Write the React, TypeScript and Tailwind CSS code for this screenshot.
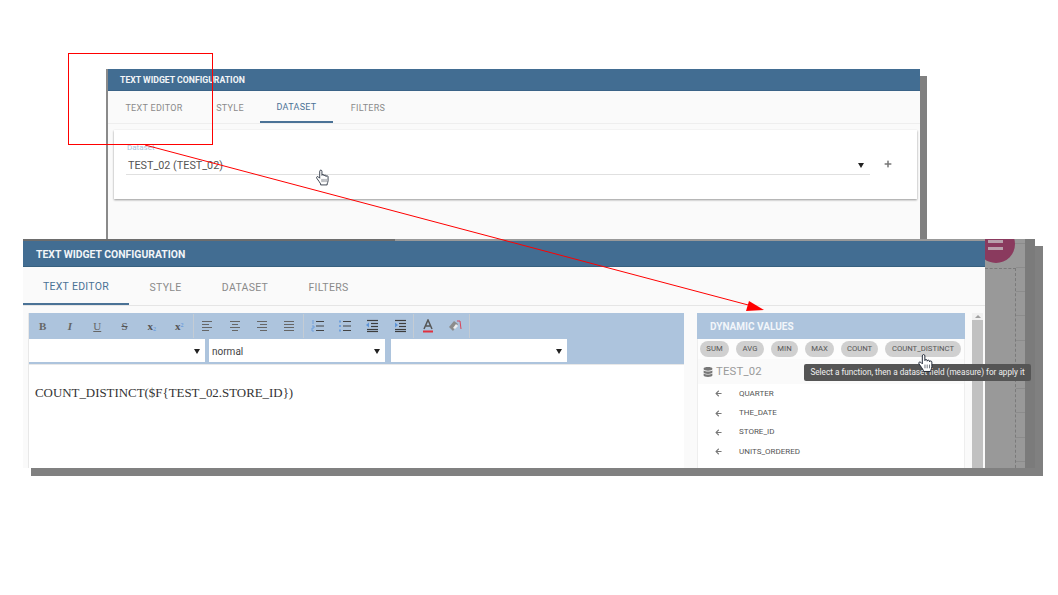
import { FaArrowLeft, FaDatabase, FaPlus } from "react-icons/fa";

const HandCursor = ({ className }: { className: string }) => (
  <svg viewBox="0 0 14 17" className={className}>
    <path
      d="M4 1.800c0-1.700 2.400-1.700 2.400 0V6.200c0-1.300 2.200-1.300 2.200 0v.6c0-1.300 2.200-1.300 2.200 0v.7c0-1.200 2.200-1.200 2.200.1v4.400c0 1.600-.8 2.400-1 3.400v1.100H5v-1.100C4 13.600 2.600 11.800.9 9.400c-.9-1.300.6-2.600 1.700-1.500L4 9.300z"
      fill="#fff"
      stroke="#1b2433"
      strokeWidth="0.9"
      strokeLinejoin="round"
    />
    <path d="M6.500 10v3.500M8.600 10v3.500M10.800 10v3.500" stroke="#1b2433" strokeWidth=".6" />
  </svg>
);

const Caret = () => (
  <span className="w-0 h-0 border-x-[3px] border-x-transparent border-t-[5px] border-t-[#222]" />
);

// toolbar glyphs, all drawn on a 14x14 box
const Lines = ({ kind }: { kind: string }) => {
  const rows = [2, 5, 8, 11];
  const x = (i: number): [number, number] => {
    if (kind === "left") return [2, i % 2 ? 9 : 12];
    if (kind === "center") return i % 2 ? [4, 10] : [2, 12];
    if (kind === "right") return [i % 2 ? 5 : 2, 12];
    return [2, 12];
  };
  return (
    <svg viewBox="0 0 14 14" className="w-[14px] h-[14px]">
      {rows.map((y, i) => (
        <line key={y} x1={x(i)[0]} x2={x(i)[1]} y1={y + 0.5} y2={y + 0.5} stroke="#666" strokeWidth="1" />
      ))}
    </svg>
  );
};

const ListIcon = ({ bullet }: { bullet: boolean }) => (
  <svg viewBox="0 0 14 14" className="w-[14px] h-[14px]">
    {[2.5, 7, 11.5].map((y) => (
      <line key={y} x1="5" x2="13" y1={y} y2={y} stroke="#444" strokeWidth="1" />
    ))}
    {bullet ? (
      [1.5, 6, 10.5].map((y) => <rect key={y} x="1" y={y} width="2" height="2" fill="#6f9fdc" />)
    ) : (
      <path d="M2 1v4M1 7h2v2H1v3h2" stroke="#6f9fdc" strokeWidth="1" fill="none" />
    )}
  </svg>
);

const IndentIcon = ({ out }: { out: boolean }) => (
  <svg viewBox="0 0 14 14" className="w-[14px] h-[14px]">
    {[1.5, 4.5, 7.5, 10.5, 12.5].map((y) => (
      <line key={y} x1={y > 3 && y < 9 ? 6 : 2} x2="13" y1={y} y2={y} stroke="#3d3d3d" strokeWidth="1.2" />
    ))}
    <path d={out ? "M1 6l3-2.500v5z" : "M5 6L2 3.500v5z"} fill="#5d93d6" />
  </svg>
);

const toolbar = [
  [
    <span className="font-['Liberation_Serif',serif] font-bold text-[11px] text-[#666]">B</span>,
    <span className="font-['Liberation_Serif',serif] italic font-bold text-[11px] text-[#666]">I</span>,
    <span className="font-['Liberation_Serif',serif] underline text-[11px] text-[#666]">U</span>,
    <span className="font-['Liberation_Serif',serif] line-through text-[11px] text-[#555]">S</span>,
    <span className="font-['Liberation_Serif',serif] font-bold text-[11px] text-[#555]">
      x<sub className="text-[6px] text-[#6f9fdc]">2</sub>
    </span>,
    <span className="font-['Liberation_Serif',serif] font-bold text-[11px] text-[#555]">
      x<sup className="text-[6px] text-[#6f9fdc]">2</sup>
    </span>,
  ],
  [<Lines kind="left" />, <Lines kind="center" />, <Lines kind="right" />, <Lines kind="justify" />],
  [<ListIcon bullet={false} />, <ListIcon bullet />, <IndentIcon out />, <IndentIcon out={false} />],
  [
    <svg viewBox="0 0 14 14" className="w-[14px] h-[14px]">
      <path d="M3 10L7 1l4 9M5 7h4" stroke="#555" strokeWidth="1.500" fill="none" />
      <rect x="2" y="11.500" width="10" height="2" fill="#e0313f" />
    </svg>,
    <svg viewBox="0 0 14 14" className="w-[14px] h-[14px]">
      <path d="M1 8l5-6 4 3-5 7z" fill="#8c8c8c" />
      <path d="M5 9l3-4 2 2-3 3z" fill="#eee" />
      <path d="M9 2h3l1 8" stroke="#d9455a" strokeWidth="1" fill="none" />
    </svg>,
  ],
];

const functions = [
  { name: "SUM", width: "w-[29px]" },
  { name: "AVG", width: "w-[28px]" },
  { name: "MIN", width: "w-[27px]" },
  { name: "MAX", width: "w-[29px]" },
  { name: "COUNT", width: "w-[37px]" },
  { name: "COUNT_DISTINCT", width: "w-[76px]" },
];

const fields = ["QUARTER", "THE_DATE", "STORE_ID", "UNITS_ORDERED"];

const Select = ({ value, width }: { value?: string; width: string }) => (
  <div className={`${width} h-[23px] bg-white flex items-center justify-between pl-[3px] pr-[5px] pt-px text-[10px] text-[#444]`}>
    <span>{value}</span>
    <Caret />
  </div>
);

const TopWindow = () => (
  <div className="absolute left-[106px] top-[69px] w-[814px] h-[180px] bg-[#fafafa] border-l-2 border-l-[#8a8a8a] shadow-[7px_7px_0_#808080] flex flex-col">
    <div className="h-[22px] shrink-0 bg-[#426d92] border-b border-b-[#3a6387] flex items-center pl-[12px] pt-[2px] text-[8.700px] font-bold text-[#f2f5f8]">
      TEXT WIDGET CONFIGURATION
    </div>
    <div className="h-[33px] shrink-0 flex border-b border-b-[#eeeeee] pt-[3px] text-[9px] tracking-[0.3px] text-[#8a8a8a]">
      <div className="w-[92px] flex items-center justify-center">TEXT EDITOR</div>
      <div className="w-[60px] flex items-center justify-center">STYLE</div>
      <div className="w-[73px] flex items-center justify-center text-[#4a7296] border-b-2 border-b-[#4a7296]">DATASET</div>
      <div className="w-[70px] flex items-center justify-center">FILTERS</div>
    </div>
    <div className="ml-[6px] mr-[3px] mt-[6px] h-[69px] bg-white shadow-[0_1px_2px_rgba(0,0,0,0.4)] px-[12px] pt-[14px] flex items-start">
      <div className="w-[744px] h-[31px] border-b border-b-[#e0e0e0]">
        <div className="pl-px text-[8px] leading-[8px] text-[#a9c4dc]">Dataset</div>
        <div className="flex items-center justify-between pl-[2px] pr-[6px] mt-[7px] text-[10.800px] leading-[13px] text-[#555]">
          <span>TEST_02 (TEST_02)</span>
          <span className="w-0 h-0 border-x-[3.500px] border-x-transparent border-t-[5px] border-t-[#222]" />
        </div>
      </div>
      <FaPlus className="ml-[14px] mt-[16px] w-[8px] h-[8px] text-[#777]" />
    </div>
  </div>
);

const EditorPane = () => (
  <div className="w-[656px] bg-white border-l border-l-[#e8e8e8] flex flex-col">
    <div className="h-[51px] bg-[#adc4dd] flex flex-col">
      <div className="h-[26px] flex">
        {toolbar.map((group, i) => (
          <div key={i} className="flex border-r border-r-[#c4ccd4] my-px">
            {group.map((icon, j) => (
              <div key={j} className="w-[27.300px] flex items-center justify-center">
                {icon}
              </div>
            ))}
          </div>
        ))}
      </div>
      <div className="flex gap-[4px]">
        <Select width="w-[176px]" />
        <Select width="w-[176px]" value="normal" />
        <div className="ml-[2px]">
          <Select width="w-[176px]" />
        </div>
      </div>
    </div>
    <div className="border-t border-t-[#e8e8e8] px-[6px] pt-[20px] font-['Liberation_Serif',serif] text-[12.900px] leading-[16px] text-[#333]">
      {"COUNT_DISTINCT($F{TEST_02.STORE_ID})"}
    </div>
  </div>
);

const DynamicValues = () => (
  <div className="w-[268px] bg-white border-x border-x-[#eeeeee] flex flex-col">
    <div className="h-[26px] shrink-0 -mx-px bg-[#adc4dd] flex items-center pl-[13px] text-[10px] font-bold text-[#f2f6fa]">
      DYNAMIC VALUES
    </div>
    <div className="h-[20px] shrink-0 flex items-center gap-[7px] pl-[2px] bg-[#fdfdfd]">
      {functions.map((fn) => (
        <div
          key={fn.name}
          className={`${fn.width} h-[16px] shrink-0 rounded-full bg-[#d0d0d0] flex items-center justify-center text-[7.700px] text-[#555]`}
        >
          {fn.name}
        </div>
      ))}
    </div>
    <div className="h-[25px] shrink-0 bg-[#fafafa] flex items-center pl-[5px] pt-px gap-[3px] text-[11.300px] tracking-[0.2px] text-[#999]">
      <FaDatabase className="w-[10px] h-[10px] text-[#777]" />
      TEST_02
    </div>
    {fields.map((field) => (
      <div key={field} className="h-[19.400px] shrink-0 flex items-center pl-[17px] gap-[17px] text-[8px] text-[#555]">
        <FaArrowLeft className="w-[7px] h-[7px] text-[#777]" />
        {field}
      </div>
    ))}
  </div>
);

const BottomWindow = () => (
  <div className="absolute left-[23px] top-[239px] w-[1012px] h-[229px] flex shadow-[8px_7px_0_#808080,8px_8px_0_#808080] bg-[#7b7b7b]">
    <div className="w-[962px] flex flex-col">
      <div className="h-[2px] shrink-0 flex">
        <div className="w-[372px] bg-[#6d6d6d]" />
        <div className="flex-1 bg-[#999]" />
      </div>
      <div className="flex-1 min-h-0 flex flex-col bg-[#fafafa]">
        <div className="h-[26px] shrink-0 bg-[#426d92] border-b border-b-[#37607f] flex items-center pl-[13px] pt-[2px] text-[10.400px] font-bold text-[#f2f5f8]">
          TEXT WIDGET CONFIGURATION
        </div>
        <div className="h-[39px] shrink-0 flex border-b border-b-[#e5e5e5] pt-[3px] text-[10.500px] tracking-[0.3px] text-[#8a8a8a]">
          <div className="w-[106px] flex items-center justify-center text-[#4a7296] border-b-2 border-b-[#4a7296]">
            TEXT EDITOR
          </div>
          <div className="w-[73px] flex items-center justify-center">STYLE</div>
          <div className="w-[86px] flex items-center justify-center">DATASET</div>
          <div className="w-[81px] flex items-center justify-center">FILTERS</div>
        </div>
        <div className="flex flex-1 min-h-0 pl-[5px] pt-[7px] overflow-hidden">
          <EditorPane />
          <div className="w-[13px] shrink-0" />
          <DynamicValues />
          <div className="ml-[7px] w-[11px] bg-[#f1f1f1] flex flex-col items-center">
            <div className="h-[7px] flex items-center">
              <span className="w-0 h-0 border-x-[3px] border-x-transparent border-b-[3px] border-b-[#a0a0a0]" />
            </div>
            <div className="w-full flex-1 bg-[#c1c1c1]" />
          </div>
        </div>
      </div>
    </div>
    {/* what shows of the page behind the dialog */}
    <div className="w-[40px] shrink-0 bg-[#999] relative overflow-hidden">
      <div className="absolute left-0 top-[4px] w-full h-px bg-[#8c8c8c]" />
      <div className="absolute left-[-8px] top-[-14px] w-[38px] h-[38px] rounded-full bg-[#8a3a5e]" />
      <div className="absolute left-[3px] top-[1px] w-[15px] h-[3px] bg-[#b8a0ab]" />
      <div className="absolute left-[3px] top-[8px] w-[15px] h-[3px] bg-[#b8a0ab]" />
      <div className="absolute left-0 top-[29px] w-[31px] h-[210px] border-t border-r border-dashed border-[#7a7a7a]" />
      <div className="absolute left-[31px] top-[28px] w-[9px] flex flex-col">
        <div className="h-[24px] border-t border-t-[#8c8c8c]" />
        {[0, 1, 2, 3, 4, 5, 6, 7].map((n) => (
          <div key={n} className="h-[24.300px] shrink-0 border-t border-t-[#8c8c8c]" />
        ))}
      </div>
    </div>
    <div className="w-[10px] shrink-0 bg-[#7b7b7b]" />
  </div>
);

export default function App() {
  return (
    <div className="relative w-[1058px] h-[595px] bg-white overflow-hidden font-['Roboto',sans-serif]">
      <TopWindow />
      <BottomWindow />

      <HandCursor className="absolute left-[316px] top-[169px] w-[13px] h-[17px]" />

      {/* tooltip and cursor over the function chips */}
      <div className="absolute left-[804px] top-[364px] w-[227px] h-[17px] rounded-[2px] bg-[#555] flex items-center justify-center text-[8.200px] text-[#f0f0f0] whitespace-nowrap">
        Select a function, then a dataset field (measure) for apply it
      </div>
      <HandCursor className="absolute left-[918px] top-[354px] w-[15px] h-[18px]" />

      {/* red annotation */}
      <div className="absolute left-[68px] top-[53px] w-[145px] h-[92px] border border-[#f00]" />
      <svg className="absolute left-0 top-0 w-[1058px] h-[595px] pointer-events-none">
        <line x1="145" y1="145" x2="752" y2="306" stroke="#f00" strokeWidth="1" />
        <path d="M764 310L749 301L746 311z" fill="#f00" />
      </svg>
    </div>
  );
}
